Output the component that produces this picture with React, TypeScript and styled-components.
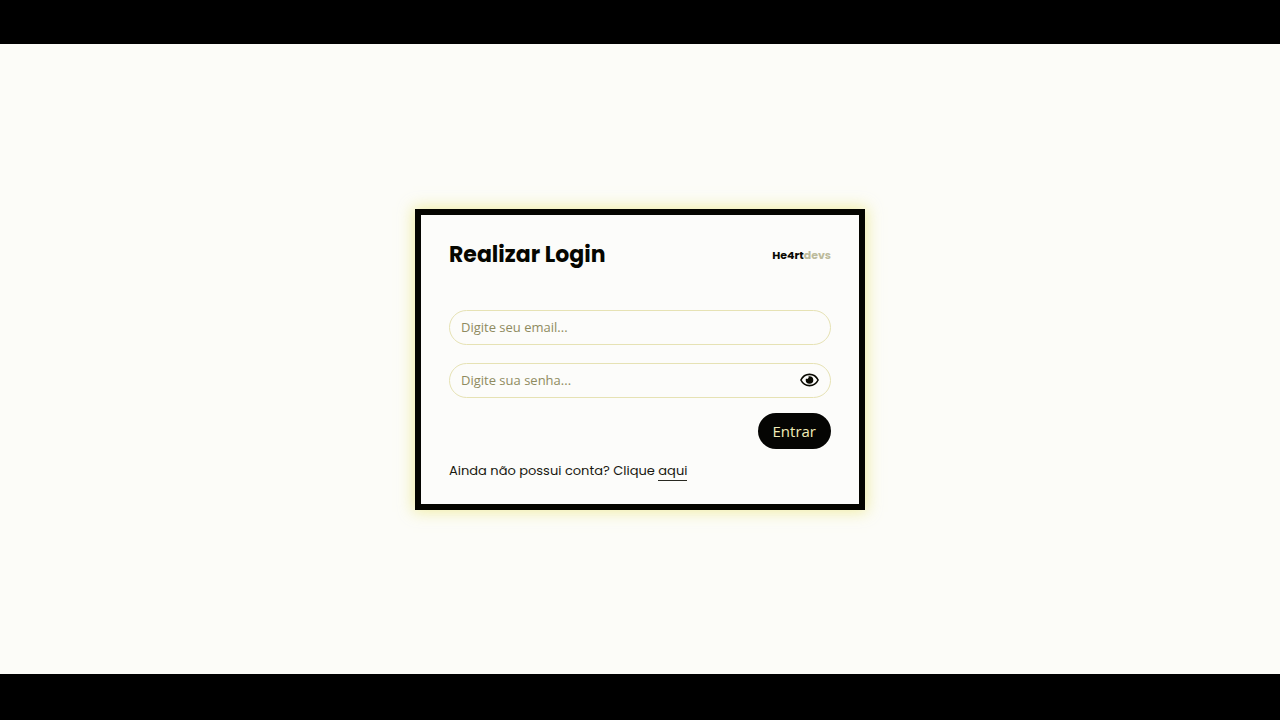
import React, { useState } from "react";
import styled, { createGlobalStyle } from "styled-components";

const headingFont = `Poppins, Inter, sans-serif`;
const bodyFont = `"Open Sans", sans-serif`;

const GlobalStyle = createGlobalStyle`
  *, *::before, *::after { box-sizing: border-box; }
  body { margin: 0; background: #000; }
`;

const Page = styled.div`
  display: flex;
  flex-direction: column;
  min-height: 100vh;
  padding: 44px 0 46px;
  background: #000;
`;

const Stage = styled.main`
  flex: 1;
  display: flex;
  align-items: center;
  justify-content: center;
  background: #fcfcf8;
`;

const Card = styled.form`
  display: flex;
  flex-direction: column;
  width: 100%;
  max-width: 450px;
  padding: 20px 28px;
  border: 6px solid #050500;
  background: #fcfcfa;
  box-shadow: 0 0 14px 2px rgba(236, 232, 130, 0.7);
`;

const Header = styled.header`
  display: flex;
  align-items: center;
  justify-content: space-between;
  height: 40px;
  margin-bottom: 35px;
`;

const Title = styled.h1`
  margin: 0;
  font: 700 22px/40px ${headingFont};
  color: #060600;
`;

const Brand = styled.span`
  font: 700 11px/38px ${headingFont};
  color: #0a0a04;
`;

const BrandSuffix = styled.span`
  color: #bdbb9c;
`;

const Fields = styled.div`
  display: flex;
  flex-direction: column;
  gap: 18px;
`;

const Field = styled.label`
  display: flex;
  align-items: center;
  height: 35px;
  padding: 0 11px;
  border: 1px solid #e6e2b4;
  border-radius: 18px;
`;

const Input = styled.input`
  flex: 1;
  min-width: 0;
  padding: 0;
  border: 0;
  outline: 0;
  background: transparent;
  font: 400 13px/20px ${bodyFont};
  color: #222;

  &::placeholder {
    color: #8f8b60;
    opacity: 1;
  }
`;

const RevealButton = styled.button`
  display: flex;
  padding: 0;
  border: 0;
  background: none;
  color: #080800;
  cursor: pointer;
`;

const SubmitButton = styled.button`
  align-self: flex-end;
  height: 36px;
  margin-top: 15px;
  padding: 0 15px;
  border: 0;
  border-radius: 18px;
  background: #050503;
  color: #f1edb8;
  font: 400 15px/36px ${bodyFont};
  cursor: pointer;
`;

const SignUp = styled.p`
  margin: 10px 0 1px;
  font: 400 13px/24px ${headingFont};
  color: #181810;
`;

const SignUpLink = styled.a`
  display: inline-block;
  line-height: 19px;
  border-bottom: 1px solid #282820;
  color: inherit;
  text-decoration: none;
`;

function EyeIcon() {
  return (
    <svg width="19" height="14" viewBox="0 0 19 14" fill="none" aria-hidden="true">
      <path
        d="M0.9 7C2.6 3.5 5.7 1.4 9.5 1.4S16.4 3.5 18.1 7C16.4 10.5 13.3 12.6 9.5 12.6S2.6 10.5 0.9 7Z"
        stroke="currentColor"
        strokeWidth="1.6"
        strokeLinejoin="round"
      />
      <path
        d="M9.5 3.2A3.8 3.8 0 1 1 5.7 7C5.7 6.5 5.8 6 6 5.6C7.4 6.5 9.3 5.2 8.5 3.3C8.8 3.2 9.2 3.2 9.5 3.2Z"
        fill="currentColor"
      />
    </svg>
  );
}

export default function App() {
  const [visible, setVisible] = useState(false);

  return (
    <>
      <GlobalStyle />
      <Page>
        <Stage>
          <Card onSubmit={(event: React.FormEvent) => event.preventDefault()}>
            <Header>
              <Title>Realizar Login</Title>
              <Brand>
                He4rt<BrandSuffix>devs</BrandSuffix>
              </Brand>
            </Header>
            <Fields>
              <Field htmlFor="email">
                <Input id="email" type="email" aria-label="Email" placeholder="Digite seu email..." />
              </Field>
              <Field htmlFor="password">
                <Input
                  id="password"
                  type={visible ? "text" : "password"}
                  aria-label="Senha"
                  placeholder="Digite sua senha..."
                />
                <RevealButton type="button" aria-label="Mostrar senha" onClick={() => setVisible(!visible)}>
                  <EyeIcon />
                </RevealButton>
              </Field>
            </Fields>
            <SubmitButton type="submit">Entrar</SubmitButton>
            <SignUp>
              Ainda não possui conta? Clique <SignUpLink href="#cadastro">aqui</SignUpLink>
            </SignUp>
          </Card>
        </Stage>
      </Page>
    </>
  );
}
